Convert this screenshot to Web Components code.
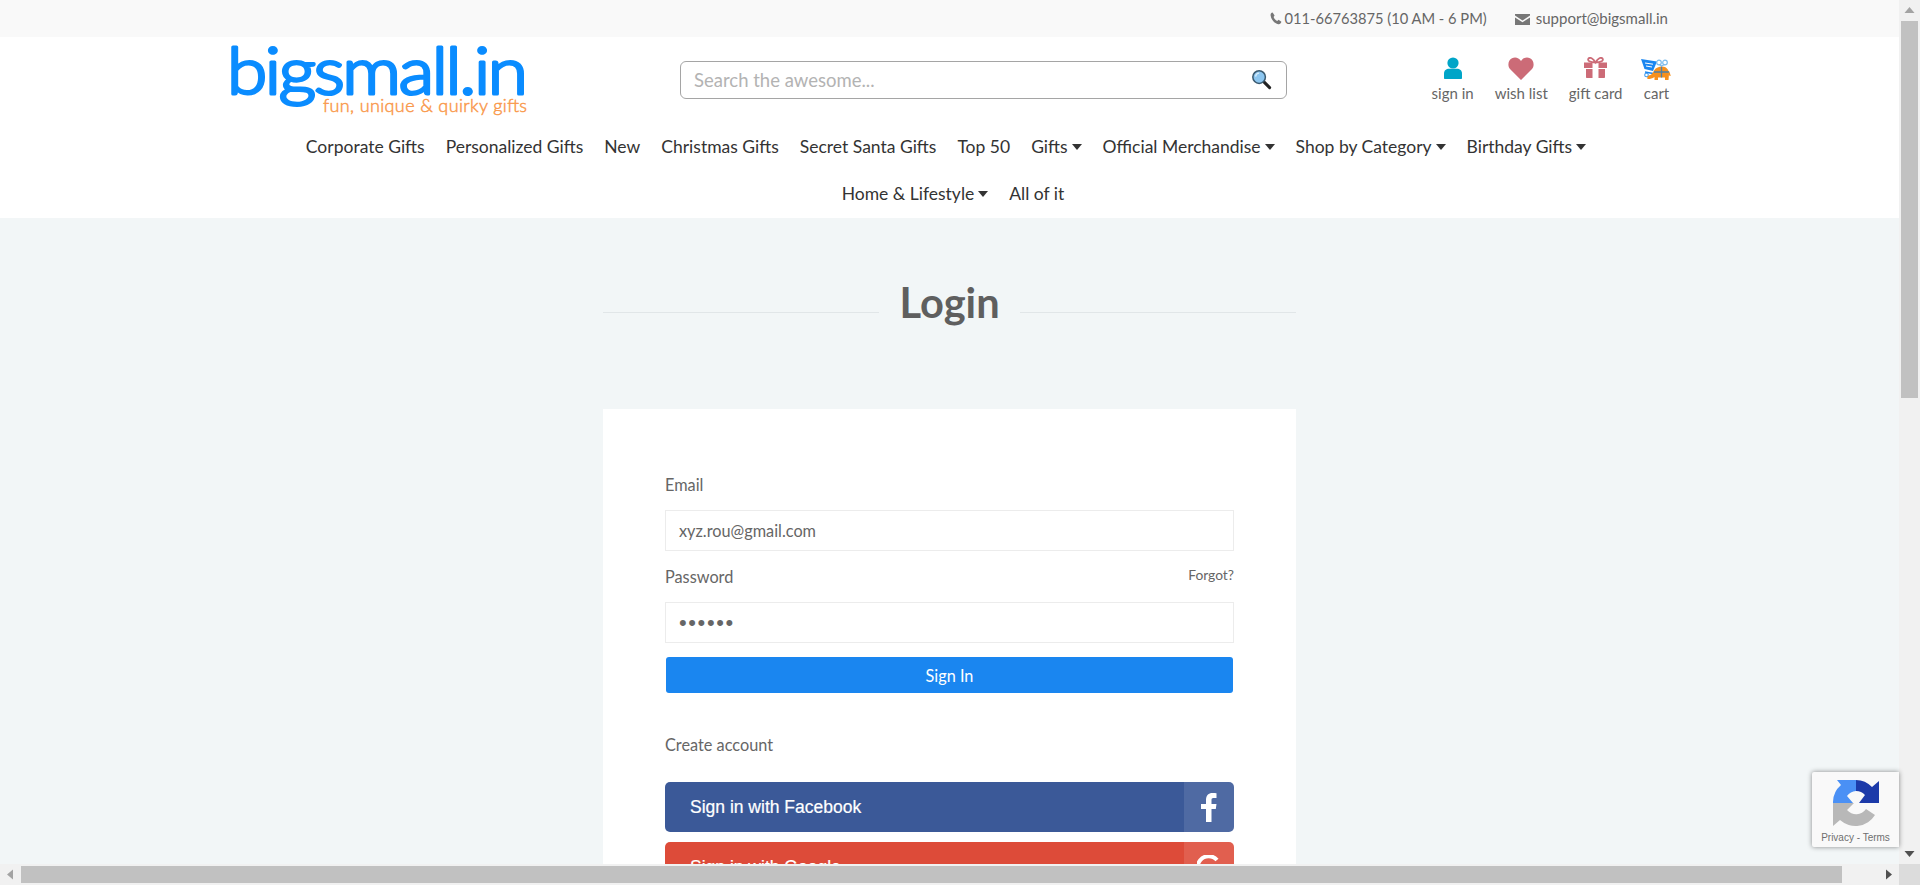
<!DOCTYPE html>
<html lang="en">
<head>
<meta charset="utf-8">
<title>Login - bigsmall.in</title>
<style>
    html, body { margin: 0; height: 100%; overflow: hidden; }
    body { font-family: "Lato", "Liberation Sans", sans-serif; color: #666; }
</style>
</head>
<body>
<browser-frame>
    <site-topbar></site-topbar>
    <site-header></site-header>
    <main-nav>
        <nav-item>Corporate Gifts</nav-item>
        <nav-item>Personalized Gifts</nav-item>
        <nav-item>New</nav-item>
        <nav-item>Christmas Gifts</nav-item>
        <nav-item>Secret Santa Gifts</nav-item>
        <nav-item>Top 50</nav-item>
        <nav-item caret>Gifts</nav-item>
        <nav-item caret>Official Merchandise</nav-item>
        <nav-item caret>Shop by Category</nav-item>
        <nav-item caret style="margin-right:7px">Birthday Gifts</nav-item>
        <nav-item caret style="margin-left:7px;padding-bottom:2px;box-sizing:border-box">Home &amp; Lifestyle</nav-item>
        <nav-item style="padding-bottom:2px;box-sizing:border-box">All of it</nav-item>
    </main-nav>
    <login-page></login-page>
    <recaptcha-badge slot="overlay"></recaptcha-badge>
</browser-frame>

<script>
// Small helper so each component stays a class + template string
function define(name, html, extra) {
    const template = document.createElement('template');
    template.innerHTML = html;
    class Component extends HTMLElement {
        constructor() {
            super();
            const shadow = this.attachShadow({ mode: 'open' });
            shadow.appendChild(template.content.cloneNode(true));
        }
        connectedCallback() {
            if (extra) extra(this);
        }
    }
    customElements.define(name, Component);
}

// Page window with the browser's scrollbars around it
define('browser-frame', `
<style>
    :host { display: grid; grid-template-columns: 1fr 21px; grid-template-rows: 1fr 21px; width: 1920px; height: 885px; position: relative; overflow: hidden; }
    .view { overflow: hidden; background: #f2f6f7; min-width: 0; min-height: 0; }
    .corner { background: #dcdcdc; }
</style>
<div class="view"><slot></slot></div>
<scroll-bar dir="v"></scroll-bar>
<scroll-bar dir="h"></scroll-bar>
<div class="corner"></div>
<slot name="overlay"></slot>
`);

define('scroll-bar', `
<style>
    :host { display: flex; background: #f1f1f1; position: relative; }
    :host([dir="v"]) { flex-direction: column; align-items: center; }
    :host([dir="h"]) { flex-direction: row; align-items: center; }
    .btn { flex: none; width: 21px; height: 21px; display: flex; align-items: center; justify-content: center; }
    .track { flex: 1; display: flex; }
    :host([dir="v"]) .track { flex-direction: column; align-items: center; }
    :host([dir="h"]) .track { align-items: center; }
    .thumb { background: #c1c1c1; }
    :host([dir="v"]) .thumb { width: 17px; height: 377px; }
    :host([dir="h"]) .thumb { height: 17px; width: 1821px; }
    svg { display: block; }
</style>
<div class="btn first"></div>
<div class="track"><div class="thumb"></div></div>
<div class="btn last"></div>
`, el => {
    const v = el.getAttribute('dir') === 'v';
    const arrow = (points, fill) => `<svg width="15" height="15" viewBox="0 0 15 15"><polygon points="${points}" fill="${fill}"/></svg>`;
    el.shadowRoot.querySelector('.first').innerHTML = v ? arrow('2.5,10 12.5,10 7.5,4', '#a3a3a3') : arrow('10,2.5 10,12.5 4,7.5', '#a3a3a3');
    el.shadowRoot.querySelector('.last').innerHTML = v ? arrow('2.5,5 12.5,5 7.5,11', '#505050') : arrow('5,2.5 5,12.5 11,7.5', '#505050');
});

define('site-topbar', `
<style>
    :host { display: flex; justify-content: flex-end; align-items: center; box-sizing: border-box; height: 37px; padding: 0 231px 2px 0; background: #f9f9f9; font-size: 14.7px; color: #666; }
    .item { display: flex; align-items: center; }
    .mail { margin-left: 28px; font-size: 15px; }
    svg { display: block; }
</style>
<div class="item">
    <svg width="12" height="13" viewBox="0 0 12 13" style="margin-right:2px;margin-top:2px"><path d="M2.6 .6 L4.6 3.6 3.6 5 C4.2 6.8 5.4 8.2 7.2 9 L8.6 7.8 11.4 9.8 C11 11.6 9.6 12.6 8.2 12.2 C4.4 11.2 1.2 7.6 .6 3.4 C.4 2 1.2 .9 2.6 .6 Z" fill="#777"/></svg>
    <span>011-66763875 (10 AM - 6 PM)</span>
</div>
<div class="item mail">
    <svg width="15" height="11" viewBox="0 0 15 11" style="margin-right:6px;margin-top:4px"><path d="M0 0 H15 V1.6 L7.5 6.4 0 1.6 Z M0 3.4 L7.5 8.2 15 3.4 V11 H0 Z" fill="#777"/></svg>
    <span>support@bigsmall.in</span>
</div>
`);

// Logo lockup: real text, rounded off with a round-joined stroke
define('site-logo', `
<style>
    :host { display: block; width: 300px; height: 85px; margin-left: 1.5px; }
    svg { display: block; overflow: visible; }
    .name { font: 300 64px "Lato", sans-serif; fill: #0a8cff; stroke: #0a8cff; stroke-width: 3px; stroke-linejoin: round; stroke-linecap: round; }
    .tag { font: 300 18px "Lato", sans-serif; fill: #f99a4e; stroke: #f99a4e; stroke-width: .5px; stroke-linejoin: round; }
</style>
<svg width="300" height="85" viewBox="0 0 300 85">
    <text class="name" transform="translate(-4 57) scale(1.14 1.02)" x="0" y="0" textLength="264" lengthAdjust="spacing">bigsmall.in</text>
    <text class="tag" x="92" y="75" textLength="204" lengthAdjust="spacing">fun, unique &amp; quirky gifts</text>
</svg>
`);

define('search-box', `
<style>
    :host { display: flex; align-items: center; box-sizing: border-box; width: 607px; height: 38px; margin-top: 24px; border: 1px solid #a5a5a5; border-radius: 6px; background: #fff; padding: 0 14px 0 13px; }
    .ph { flex: 1; font-size: 18.5px; color: #b3b3b3; }
    svg { display: block; margin-top: -2px; }
</style>
<span class="ph">Search the awesome...</span>
<svg width="21" height="21" viewBox="0 0 22 22">
    <path d="M13 13 L19.5 19.5" stroke="#222" stroke-width="3.2" stroke-linecap="round"/>
    <circle cx="8.5" cy="8.5" r="6.6" fill="#8cc6f0" stroke="#3a5a70" stroke-width="1.6"/>
    <path d="M4.8 8 A4 4 0 0 1 8.5 4.4" fill="none" stroke="#d6ecfb" stroke-width="1.4"/>
</svg>
`);

define('header-link', `
<style>
    :host { display: flex; flex-direction: column; align-items: center; font-size: 15px; color: #666; }
    .ic { height: 26px; margin-top: 20px; display: flex; align-items: flex-start; justify-content: center; }
    span { line-height: 20px; white-space: nowrap; }
</style>
<div class="ic"><slot name="icon"></slot></div>
<span><slot></slot></span>
`);

define('site-header', `
<style>
    :host { display: block; background: #fff; height: 85px; }
    .row { display: grid; grid-template-columns: 450.5px 607px 1fr; width: 1440px; margin: 0 auto; height: 85px; }
    .links { display: flex; justify-content: flex-end; gap: 21px; }
    svg { display: block; }
</style>
<div class="row">
    <site-logo></site-logo>
    <search-box></search-box>
    <div class="links">
        <header-link>
            <svg slot="icon" width="20" height="22" viewBox="0 0 20 22"><circle cx="10" cy="6" r="5.6" fill="#00a5c8"/><path d="M1 21 V16.5 C1 13.4 3.4 11.8 6 11.8 H14 C16.6 11.8 19 13.4 19 16.5 V21 C19 21.6 18.6 22 18 22 H2 C1.400 22 1 21.600 1 21 Z" fill="#00a5c8"/></svg>
            sign in
        </header-link>
        <header-link>
            <svg slot="icon" width="26" height="23" viewBox="0 0 26 23"><path d="M13 23 L2 12 C-.8 8.800 .2 3 4 1.200 C7.600 -.4 11 1 13 4 C15 1 18.400 -.4 22 1.200 C25.800 3 26.800 8.800 24 12 Z" fill="#cc6b77"/></svg>
            wish list
        </header-link>
        <header-link>
            <svg slot="icon" width="23" height="21" viewBox="0 0 23 21"><path d="M11.500 5.500 C9 1 6 0 4.500 1.500 C3 3.500 6 5.500 11.500 5.500 C17 5.500 20 3.500 18.500 1.500 C17 0 14 1 11.500 5.500 Z" fill="none" stroke="#cc6b77" stroke-width="1.800"/><path d="M0 5.500 H8.500 V11 H0 Z M14.500 5.500 H23 V11 H14.500 Z M2 12 H8.500 V21 H3 C2.400 21 2 20.600 2 20 Z M14.500 12 H21 V20 C21 20.600 20.600 21 20 21 H14.500 Z" fill="#cc6b77"/></svg>
            gift card
        </header-link>
        <header-link>
            <svg slot="icon" width="30" height="23" viewBox="0 0 30 23" style="margin:1px -1px 0 -3px">
                <path d="M0 1 L16 3.500 L12 13 L3.500 11 Z" fill="#1a86f0"/>
                <path d="M4 5 L12 6.200 M5 8 L11 9" stroke="#fff" stroke-width="1"/>
                <path d="M4 14 L12 15.500" stroke="#1a86f0" stroke-width="1.400"/>
                <circle cx="5.500" cy="17" r="1.800" fill="none" stroke="#3f9bee" stroke-width="1.100"/>
                <path d="M7 21 C5.500 21 6 17.500 9.500 17 C11 16.500 12 14.500 13 12.500 C15 9.500 18 8.500 21 8.500 C25.500 8.500 28 12 28 16 L27.500 22 H24 V19.500 H17 V22 H13.500 L13.500 19 C11.500 20.500 9 21 7 21 Z" fill="#f6901e"/>
                <path d="M27.500 12.500 C29 14 29 16 29.800 18 L28 17.500 Z" fill="#f6901e"/>
                <path d="M20.500 8.500 V19.500 M13 14 H28" stroke="#4b7fa8" stroke-width="1.300"/>
                <circle cx="18" cy="4.500" r="2.300" fill="none" stroke="#7dbcec" stroke-width="1.200"/>
                <circle cx="24" cy="4.500" r="2.300" fill="none" stroke="#7dbcec" stroke-width="1.200"/>
                <path d="M20.500 8 L18.500 6.500 M20.500 8 L23.500 6.500" stroke="#7dbcec" stroke-width="1.200"/>
            </svg>
            cart
        </header-link>
    </div>
</div>
`);

define('main-nav', `
<style>
    :host { display: block; background: #fff; }
    .list { display: flex; flex-wrap: wrap; justify-content: center; width: 1340px; margin: 0 auto; }
</style>
<div class="list"><slot></slot></div>
`);

define('nav-item', `
<style>
    :host { display: flex; align-items: center; height: 48px; padding: 0 10.5px; font-size: 17.5px; color: #333; white-space: nowrap; }
    .caret { display: none; width: 0; height: 0; margin-left: 4px; margin-top: 1px; border-left: 5.5px solid transparent; border-right: 5.5px solid transparent; border-top: 6px solid #333; }
    :host([caret]) .caret { display: block; }
</style>
<slot></slot><span class="caret"></span>
`);

define('login-title', `
<style>
    :host { display: flex; justify-content: center; width: 693px; margin: 0 auto; height: 60px; align-items: center; }
    h1 { margin: 0; padding: 0 20px; font: 700 41.6px/60px "Lato", sans-serif; color: #5f5f5f; }
    i { flex: 1; height: 1px; background: #e1e6e8; margin-top: 20px; }
</style>
<i></i><h1><slot></slot></h1><i></i>
`);

define('form-field', `
<style>
    :host { display: block; }
    .head { display: flex; justify-content: space-between; line-height: 24px; font-size: 16.3px; color: #666; margin-bottom: 13px; }
    .aside { font-size: 13.8px; margin-top: -2px; }
    .box { box-sizing: border-box; height: 41px; border: 1px solid #ececec; background: #fff; padding: 0 13px; display: flex; align-items: center; font-size: 16.3px; color: #666; }
    .box.dots { letter-spacing: 1.6px; font-family: "Liberation Sans", sans-serif; font-size: 22px; }
</style>
<div class="head"><span class="label"></span><span class="aside"></span></div>
<div class="box"></div>
`, el => {
    const root = el.shadowRoot;
    root.querySelector('.label').textContent = el.getAttribute('label');
    root.querySelector('.aside').textContent = el.getAttribute('aside') || '';
    const box = root.querySelector('.box');
    box.textContent = el.getAttribute('value');
    if (el.hasAttribute('secret')) box.classList.add('dots');
});

define('social-button', `
<style>
    :host { display: flex; height: 50px; border-radius: 5px; overflow: hidden; color: #fff; font: 400 17.5px "Liberation Sans", Arial, sans-serif; margin-bottom: 10px; }
    .text { flex: 1; background: var(--main); display: flex; align-items: center; padding-left: 25px; -webkit-text-stroke: .2px #fff; }
    .ic { flex: none; width: 50px; background: var(--light); display: flex; align-items: center; justify-content: center; }
    svg { display: block; }
</style>
<div class="text"><slot></slot></div>
<div class="ic"><slot name="icon"></slot></div>
`);

define('login-page', `
<style>
    :host { display: block; padding-top: 54px; }
    .card { box-sizing: border-box; width: 693px; margin: 77px auto 0; background: #fff; padding: 64px 62px 40px; }
    .pass { display: block; margin-top: 14px; }
    .submit { height: 36px; margin: 14px 1px 0; background: #1a86f0; border-radius: 3px; color: #fff; font-size: 16.3px; display: flex; align-items: center; justify-content: center; }
    .create { line-height: 24px; font-size: 16.3px; margin: 40px 0 25px; color: #666; }
    svg { display: block; }
</style>
<login-title>Login</login-title>
<div class="card">
    <form-field label="Email" value="xyz.rou@gmail.com"></form-field>
    <form-field class="pass" label="Password" aside="Forgot?" value="••••••" secret></form-field>
    <div class="submit">Sign In</div>
    <div class="create">Create account</div>
    <social-button style="--main:#3b5998;--light:#4f6aa3">
        Sign in with Facebook
        <svg slot="icon" width="16" height="29" viewBox="0 0 16 29"><path d="M5 29 V16 H0 V11 H5 V7 C5 2.500 7.500 0 11.500 0 C13.200 0 14.500 .1 15.500 .3 V5 H12.500 C10.800 5 10.500 5.800 10.500 7.200 V11 H15.500 L14.800 16 H10.500 V29 Z" fill="#fff"/></svg>
    </social-button>
    <social-button style="--main:#dd4b39;--light:#e15f4f">
        Sign in with Google
        <svg slot="icon" width="24" height="24" viewBox="0 0 24 24"><path d="M20 5 A11 11 0 1 0 22 16 H12 V12 H24" fill="none" stroke="#fff" stroke-width="4"/></svg>
    </social-button>
</div>
`);

define('recaptcha-badge', `
<style>
    :host { position: absolute; left: 1812px; top: 772px; width: 87px; height: 75px; box-sizing: border-box; background: #f9f9f9; border-radius: 2px 0 0 2px; box-shadow: 0 0 5px rgba(0,0,0,.45); display: flex; flex-direction: column; align-items: center; padding-top: 8px; }
    svg { display: block; margin-left: 1px; }
    span { font: 10px/12px "Liberation Sans", Arial, sans-serif; color: #6f6f6f; margin-top: 5px; white-space: nowrap; }
</style>
<svg width="46" height="47" viewBox="0 0 46 47">
    <path d="M0 23 H21 L14 30 A12 12 0 0 0 33 29 L42 35 A23 23 0 0 1 7 40 L0 46 Z" fill="#b8b8b8"/>
    <path d="M0 23 A23 23 0 0 1 8 5 L4 0 H23 V11 A12 12 0 0 0 14 16 L20 23 Z" fill="#4a90f5"/>
    <path d="M23 0 A23 23 0 0 1 39 7 L46 1 V23 H26 L32 15 A12 12 0 0 0 23 11 Z" fill="#1c3aa9"/>
</svg>
<span>Privacy - Terms</span>
`);
</script>
</body>
</html>
